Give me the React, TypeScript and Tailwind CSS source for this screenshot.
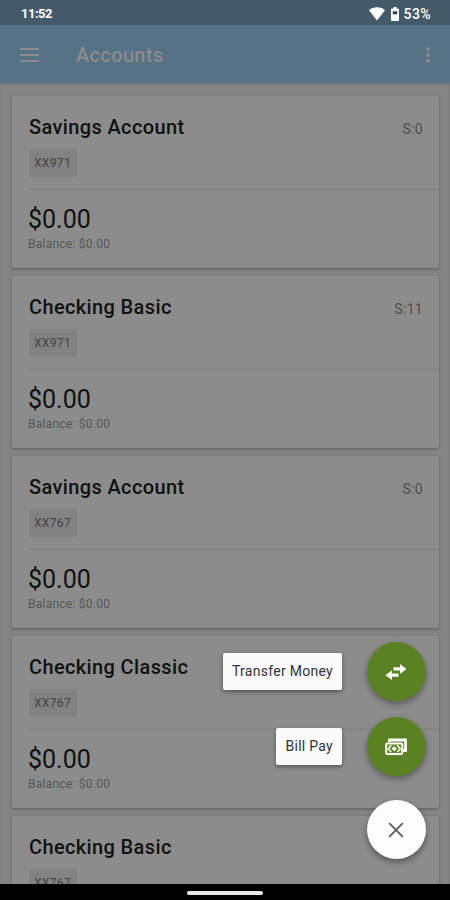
import React from "react";

type Account = { name: string; number: string; suffix: string };

const accounts: Account[] = [
  { name: "Savings Account", number: "XX971", suffix: "S:0" },
  { name: "Checking Basic", number: "XX971", suffix: "S:11" },
  { name: "Savings Account", number: "XX767", suffix: "S:0" },
  { name: "Checking Classic", number: "XX767", suffix: "" },
  { name: "Checking Basic", number: "XX767", suffix: "" },
];

function StatusBar() {
  return (
    <div className="flex h-[25px] shrink-0 items-center justify-between bg-[#455a68] pl-[21px] pr-[19px] text-white">
      <span className="mt-[2px] text-[13px] leading-4 font-bold tracking-[-0.5px]">11:52</span>
      <div className="mt-[2px] flex items-center">
        <svg width="16" height="14" viewBox="0 0 16 14" fill="currentColor">
          <path d="M0 3.2C4.5-.6 11.500-.6 16 3.200L8 13.500Z" />
        </svg>
        <svg className="ml-[6px]" width="8" height="14" viewBox="0 0 8 14">
          <path d="M2.500 0h3v1.500H7a1 1 0 0 1 1 1V13a1 1 0 0 1-1 1H1a1 1 0 0 1-1-1V2.500a1 1 0 0 1 1-1h1.500z" fill="currentColor" />
          <path d="M1.800 4.300h4.400v3H1.800z" fill="#294456" />
        </svg>
        <span className="ml-[5px] text-[14px] leading-4 font-medium tracking-[0.4px]">53%</span>
      </div>
    </div>
  );
}

function AppBar() {
  return (
    <header className="flex h-[58px] shrink-0 items-center bg-[#557286] pr-[20px] pl-[20px] text-[#8c8c8c]">
      <div className="mt-px flex w-[19px] flex-col gap-[4px]">
        <span className="h-[2px] bg-[#8c8c8c]" />
        <span className="h-[2px] bg-[#8c8c8c]" />
        <span className="h-[2px] bg-[#8c8c8c]" />
      </div>
      <h1 className="mt-[2px] ml-[37px] text-[20px] leading-6 font-medium tracking-[0.35px]">Accounts</h1>
      <div className="mt-px ml-auto flex flex-col gap-[2px]">
        <span className="size-[4px] rounded-full bg-[#8c8c8c]" />
        <span className="size-[4px] rounded-full bg-[#8c8c8c]" />
        <span className="size-[4px] rounded-full bg-[#8c8c8c]" />
      </div>
    </header>
  );
}

function AccountCard({ account }: { account: Account }) {
  return (
    <section className="h-[172px] shrink-0 rounded-[2px] bg-[#8c8c8c] pl-[17px] shadow-[0_1px_3px_rgba(0,0,0,0.3)]">
      <div className="flex h-[94px] flex-col border-b-2 border-[#848484] pt-[18px] pr-[16px]">
        <div className="flex h-[27px] items-start justify-between">
          <h2 className="text-[20px] leading-[27px] font-medium tracking-[0.37px] text-[#111]">{account.name}</h2>
          <span className="mt-[7px] text-[14px] leading-4 tracking-[0.3px] text-[#4c4c4c]">{account.suffix}</span>
        </div>
        <span className="mt-[8px] flex h-[28px] w-[48px] items-center justify-center rounded-[2px] bg-[#828282] pr-px text-[12px] font-medium tracking-[0.3px] text-[#4e4e4e]">
          {account.number}
        </span>
      </div>
      <p className="mt-[15px] -ml-px text-[25px] leading-[30px] text-[#111]">$0.00</p>
      <p className="mt-px -ml-px text-[12px] leading-[16px] tracking-[0.25px] text-[#565656]">Balance: $0.00</p>
    </section>
  );
}

function TransferIcon() {
  return (
    <svg className="mr-px" width="22" height="16" viewBox="0 0 22 16" fill="currentColor">
      <path d="M8.500 3.300H15V0l6.500 5L15 10V6.500H8.500zM13.500 9.500H7V6.200L.500 11.200 7 16v-3.300h6.500z" />
    </svg>
  );
}

function BillIcon() {
  return (
    <svg className="mr-px" width="22" height="18" viewBox="0 0 22 18" fill="none" stroke="currentColor">
      <path d="M4.500 4V2h16v10.500H18" strokeWidth="2.800" />
      <rect x="1.200" y="5.500" width="16" height="10.500" rx="1" strokeWidth="2" />
      <path d="M6.300 7.300 3.300 10.700l3 3.500M12.200 7.300l3 3.400-3 3.500" strokeWidth="1.600" />
      <path d="m9.250 8.100 2.600 2.600-2.600 2.600-2.600-2.600z" fill="currentColor" stroke="none" />
    </svg>
  );
}

function Action({ label, children }: { label: string; children: React.ReactNode }) {
  return (
    <div className="flex items-center gap-[25px]">
      <span className="flex h-[37px] items-center rounded-[2px] bg-[#fafafa] px-[9px] text-[14px] tracking-[0.28px] text-[#333] shadow-[0_2px_4px_rgba(0,0,0,0.4)]">
        {label}
      </span>
      <button className="flex size-[59px] items-center justify-center rounded-full bg-[#5a8222] text-[#fafafa] shadow-[0_3px_6px_rgba(0,0,0,0.35)]">
        {children}
      </button>
    </div>
  );
}

export default function App() {
  return (
    <div className="relative flex h-[900px] w-[450px] flex-col overflow-hidden bg-[#848484] font-[Roboto,sans-serif]">
      <StatusBar />
      <AppBar />
      <main className="flex min-h-0 flex-1 flex-col gap-2 overflow-hidden pt-[13px] pr-[11px] pl-[12px] shadow-[inset_0_2px_3px_rgba(0,0,0,0.08)]">
        {accounts.map((account, i) => (
          <AccountCard key={i} account={account} />
        ))}
      </main>
      <div className="flex h-[16px] shrink-0 items-center justify-center bg-black">
        <span className="mt-[2px] h-[4px] w-[76px] rounded-full bg-[#e8e8e8]" />
      </div>
      <div className="absolute right-[24px] bottom-[41px] flex flex-col items-end">
        <Action label="Transfer Money">
          <TransferIcon />
        </Action>
        <div className="mt-[16px]">
          <Action label="Bill Pay">
            <BillIcon />
          </Action>
        </div>
        <button className="mt-[24px] flex size-[59px] items-center justify-center rounded-full bg-[#fcfcfc] text-[#606060] shadow-[0_3px_6px_rgba(0,0,0,0.4)]">
          <svg className="mr-px" width="16" height="16" viewBox="0 0 16 16" fill="none" stroke="currentColor" strokeWidth="1.900">
            <path d="m1.200 1.200 13.600 13.600M14.800 1.200 1.200 14.800" />
          </svg>
        </button>
      </div>
    </div>
  );
}
